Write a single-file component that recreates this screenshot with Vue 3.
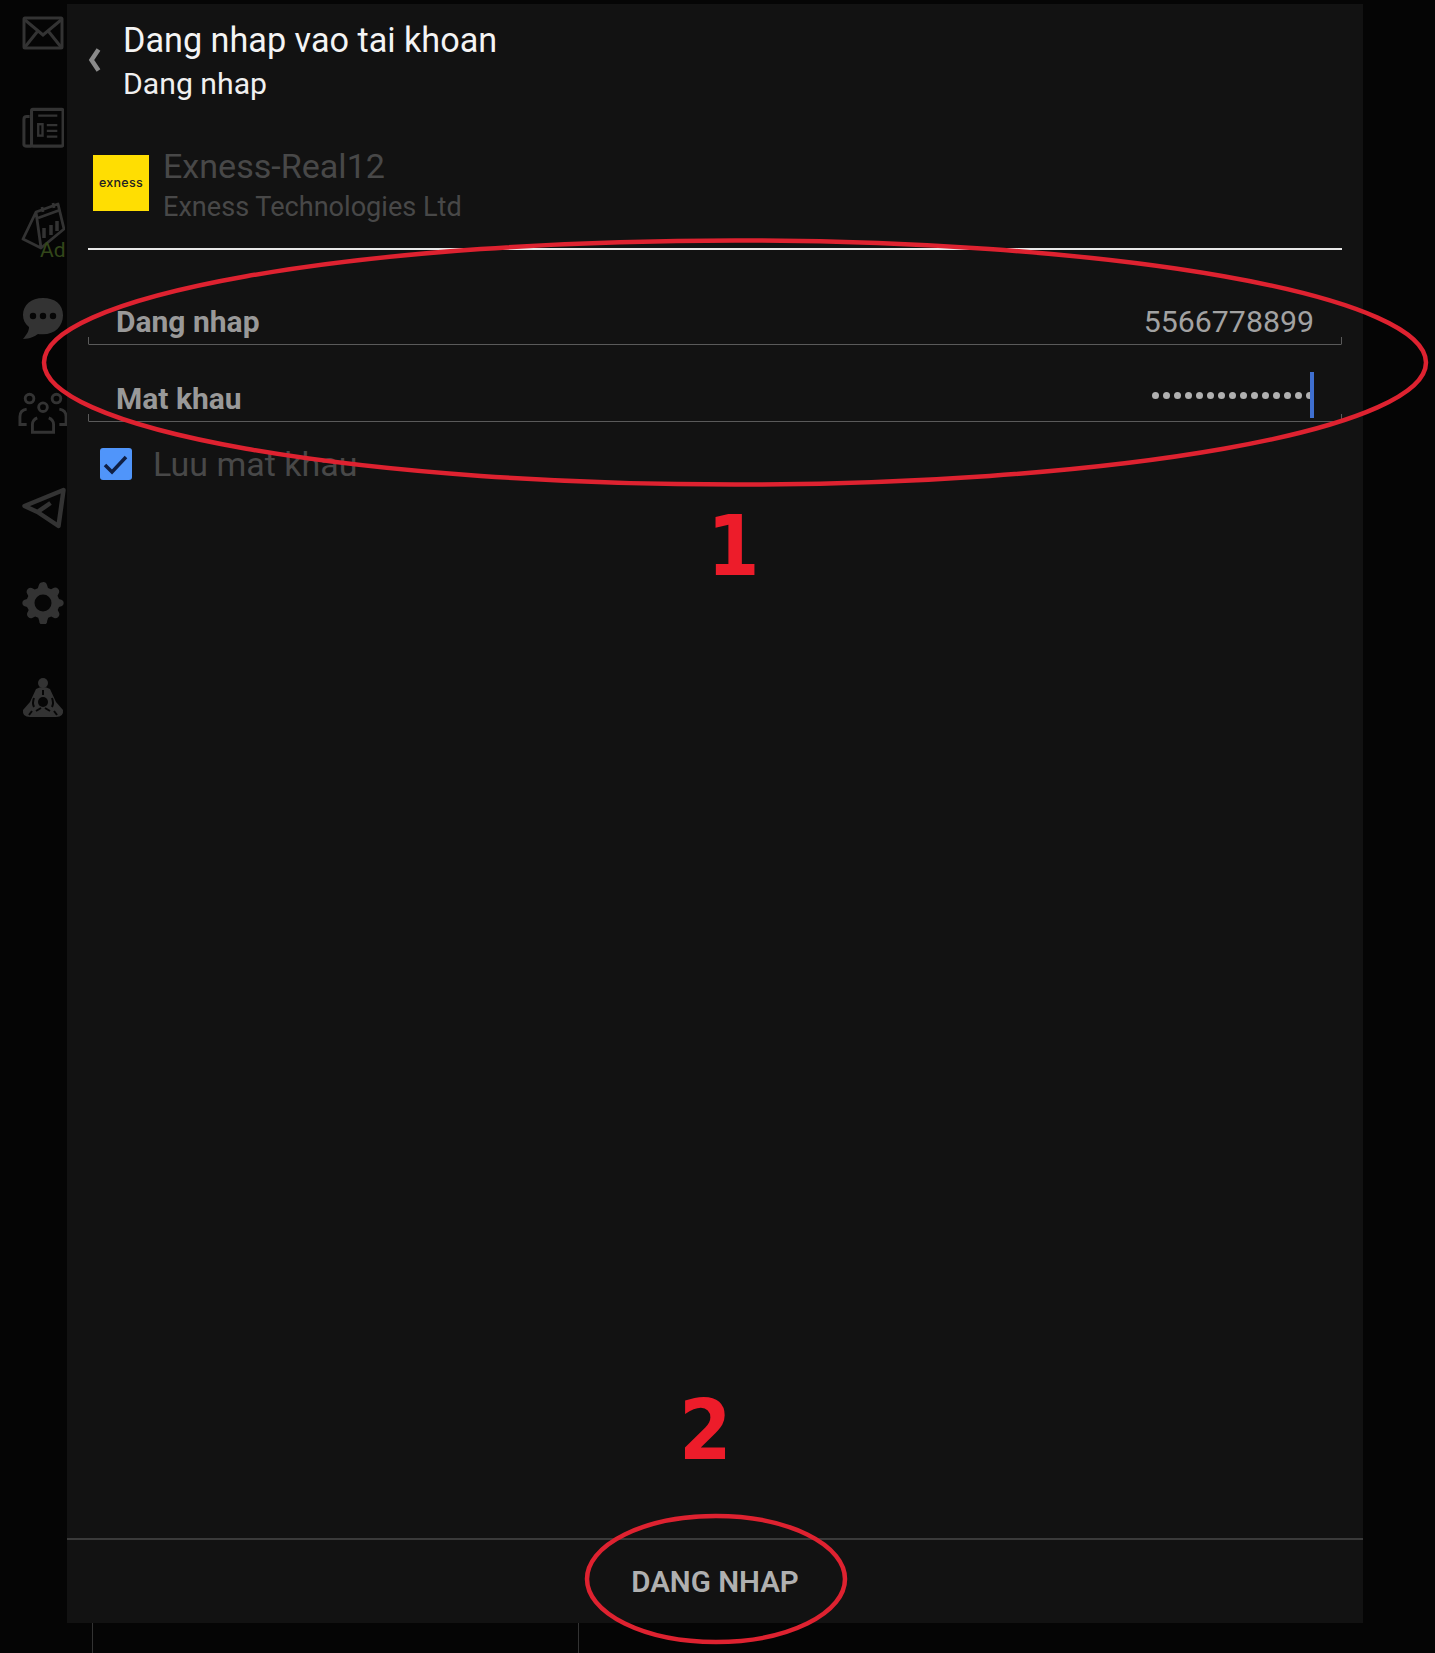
<script setup>
const dots = Array.from({ length: 15 })
</script>

<template>
  <div class="screen">
    <aside class="rail">
      <svg class="ic" viewBox="0 0 42 34" fill="none" stroke="#333" stroke-width="3">
        <rect x="2" y="2" width="38" height="30" rx="1" />
        <path d="M3 4l18 15L39 4M3 31l12-15M39 31L27 16" />
      </svg>
      <svg class="ic" viewBox="0 0 44 42" fill="none" stroke="#333" stroke-width="3.200">
        <path d="M8 9H5Q2 9 2 12v26q0 2 3 2h5M10 3q0-1.500 1.500-1.500h30q1.500 0 1.500 1.500v35q0 2-2 2H12q-2 0-2-2z" />
        <path d="M17 8h20M26 18h11M26 24h11M26 30h11" stroke-width="2.500" />
        <rect x="17" y="17" width="4.500" height="12" stroke-width="2.500" />
      </svg>
      <div class="cal">
        <svg class="ic" viewBox="0 0 44 48" fill="none" stroke="#333" stroke-width="2.800" stroke-linejoin="round">
          <path d="M15 10L37 2l6 25-23 19-18-9zM15 10L2 37M15 10l5 36" />
          <path d="M17 16l22-8M22 10l-1-5M33 6l-1-5" />
          <path d="M23 26v10M30 23v10M36 19v10" stroke-width="3.500" />
        </svg>
        <span class="ad">Ad</span>
      </div>
      <svg class="ic" viewBox="0 0 42 42">
        <path d="M21 1C9 1 1 8 1 18c0 5 2 9 6 12 0 4-2 7-6 12 7 0 12-3 15-5 2 .3 3 .3 5 .3 12 0 20-8 20-19S33 1 21 1z" fill="#333" />
        <circle cx="11" cy="19" r="3.200" fill="#060606" />
        <circle cx="21" cy="19" r="3.200" fill="#060606" />
        <circle cx="31" cy="19" r="3.200" fill="#060606" />
      </svg>
      <svg class="ic wide" viewBox="0 0 52 42" fill="none" stroke="#333" stroke-width="3">
        <circle cx="12" cy="6" r="4.500" />
        <circle cx="40" cy="6" r="4.500" />
        <circle cx="26" cy="15" r="4.500" />
        <path d="M9 17Q2 18 2 25V33H9M43 17Q50 18 50 25V33H43M20 26Q15 28 15 33V41H37V33Q37 28 32 26" />
      </svg>
      <svg class="ic tele" viewBox="0 0 46 42" fill="none" stroke="#333" stroke-width="4.500" stroke-linejoin="round">
        <path d="M43 3L4 19l13 6 21 14zM17 25L30 16" />
      </svg>
      <svg class="ic" viewBox="0 0 42 42">
        <path d="M21 0a4 4 0 0 1 4 3l1 3 3 1.300 3-1.500a4 4 0 0 1 5 5l-1.500 3L37 17l3 1a3.500 3.500 0 0 1 0 6l-3 1-1.300 3 1.500 3a4 4 0 0 1-5 5l-3-1.500-3 1.300-1 3a4 4 0 0 1-8 0l-1-3-3-1.300-3 1.500a4 4 0 0 1-5-5l1.500-3L5 25l-3-1a3.500 3.500 0 0 1 0-6l3-1 1.300-3-1.500-3a4 4 0 0 1 5-5l3 1.500 3-1.300 1-3a4 4 0 0 1 4-3z" fill="#333" />
        <circle cx="21" cy="21" r="8.500" fill="#060606" />
      </svg>
      <svg class="ic" viewBox="0 0 42 40">
        <circle cx="21" cy="5" r="5" fill="#333" />
        <path d="M14 11q7-4 14 0l6 13 7 8q1 7-7 7H8q-8 0-7-7l7-8z" fill="#333" />
        <circle cx="21" cy="24" r="5" fill="#060606" />
        <path d="M12 20q-2 5 0 9M30 20q2 5 0 9M14 33l5-3M28 33l-5-3M21 12v5M10 33l-3 4M32 33l3 4" stroke="#060606" stroke-width="2" fill="none" />
      </svg>
    </aside>

    <main class="panel">
      <header class="head">
        <svg class="back" viewBox="0 0 13 24"><path d="M10.500 1.500L3.500 12l7 10.500" fill="none" stroke="#8a8a8a" stroke-width="4.500" /></svg>
        <div class="head-text">
          <div class="title">Dang nhap vao tai khoan</div>
          <div class="subtitle">Dang nhap</div>
        </div>
      </header>

      <section class="broker">
        <div class="logo">exness</div>
        <div class="broker-text">
          <div class="server">Exness-Real12</div>
          <div class="company">Exness Technologies Ltd</div>
        </div>
      </section>

      <div class="field login">
        <span class="label">Dang nhap</span>
        <span class="value">5566778899</span>
      </div>
      <div class="field pass">
        <span class="label">Mat khau</span>
        <span class="dots">
          <i v-for="(d, i) in dots" :key="i"></i>
          <b class="caret"></b>
        </span>
      </div>

      <label class="save">
        <span class="box">
          <svg viewBox="0 0 32 32"><path d="M5 17l7 7L26 9" fill="none" stroke="#0f1f44" stroke-width="3.500" /></svg>
        </span>
        <span>Luu mat khau</span>
      </label>

      <footer class="foot">DANG NHAP</footer>
    </main>

    <i class="seam s1"></i>
    <i class="seam s2"></i>

    <svg class="marks" viewBox="0 0 1435 1653" fill="none" stroke="#de2230" stroke-width="4.500">
      <ellipse cx="735" cy="362.500" rx="691" ry="122" />
      <ellipse cx="716" cy="1579" rx="129" ry="63" />
    </svg>
    <span class="num n1">1</span>
    <span class="num n2">2</span>
  </div>
</template>

<style>
html, body { margin: 0; background: #050505; }
</style>

<style scoped>
.screen {
  position: relative;
  display: flex;
  width: 1435px;
  height: 1653px;
  overflow: hidden;
  background: #050505;
  font-family: Roboto, "Liberation Sans", sans-serif;
}
.rail {
  width: 67px;
  flex-shrink: 0;
  display: flex;
  flex-direction: column;
  align-items: center;
  padding: 12px 0 0 19px;
  box-sizing: border-box;
}
.ic {
  display: block;
  width: 42px;
  height: 42px;
  margin-bottom: 53px;
}
.ic.wide { width: 50px; }
.ic.tele { width: 47px; }
.cal { position: relative; height: 95px; }
.cal .ic { width: 44px; height: 48px; margin: 0; }
.ad {
  position: absolute;
  left: 19px;
  top: 36px;
  font-size: 21px;
  color: #33471a;
}
.panel {
  width: 1296px;
  height: 1619px;
  margin-top: 4px;
  flex-shrink: 0;
  display: flex;
  flex-direction: column;
  background: #121212;
  padding: 0 21px;
  box-sizing: border-box;
}
.head {
  display: flex;
  align-items: flex-start;
  height: 106px;
  padding-top: 13px;
  box-sizing: border-box;
}
.back { width: 13px; height: 24px; margin: 31px 22px 0 0; flex-shrink: 0; }
.title { font-size: 34.200px; line-height: 46px; color: #f4f4f4; }
.subtitle { font-size: 30.200px; line-height: 40px; margin-top: 1px; color: #f0f0f0; }
.broker {
  display: flex;
  align-items: center;
  gap: 14px;
  height: 140px;
  padding: 8px 0 0 5px;
  box-sizing: border-box;
  border-bottom: 2px solid #e8e8e8;
}
.broker-text { padding-top: 5px; }
.logo {
  width: 56px;
  height: 56px;
  background: #ffde02;
  display: flex;
  align-items: center;
  justify-content: center;
  padding-bottom: 2px;
  box-sizing: border-box;
  font-family: Inter, sans-serif;
  font-size: 12.500px;
  font-weight: 500;
  letter-spacing: 0.3px;
  color: #222;
}
.server { font-size: 34.100px; line-height: 44px; color: #484848; }
.company { font-size: 27.100px; line-height: 39px; color: #484848; }
.field {
  display: flex;
  align-items: center;
  justify-content: space-between;
  height: 42px;
  padding: 0 27px 4px 27px;
  box-sizing: border-box;
  position: relative;
  border-bottom: 1px solid #5a5a5a;
  border-left: 1px solid transparent;
  border-right: 1px solid transparent;
}
.field::before, .field::after {
  content: "";
  position: absolute;
  bottom: 0;
  width: 1px;
  height: 7px;
  background: #5a5a5a;
}
.field::before { left: -1px; }
.field::after { right: -1px; }
.login { margin-top: 53px; }
.pass { margin-top: 35px; }
.label { font-size: 30px; font-weight: 700; color: #999; }
.value { font-size: 30.300px; color: #a2a2a2; }
.dots {
  position: relative;
  display: flex;
  gap: 4px;
  align-items: center;
  margin-right: 1px;
  margin-top: -6px;
}
.dots i {
  width: 7px;
  height: 7px;
  border-radius: 50%;
  background: #b0b0b0;
}
.caret {
  position: absolute;
  right: -1px;
  top: -20px;
  width: 4px;
  height: 46px;
  background: #3f6fd0;
}
.save {
  display: flex;
  align-items: center;
  gap: 21px;
  margin: 22px 0 0 12px;
  font-size: 34px;
  color: #484848;
}
.box {
  width: 32px;
  height: 32px;
  border-radius: 3px;
  background: #5095fa;
  display: block;
}
.box svg { display: block; width: 32px; height: 32px; }
.foot {
  margin: auto -21px 0;
  height: 85px;
  border-top: 2px solid #3a3a3a;
  box-sizing: border-box;
  display: flex;
  align-items: center;
  justify-content: center;
  font-size: 29.500px;
  font-weight: 600;
  color: #b0b0b0;
}
.seam { position: absolute; width: 1px; background: #333; }
.s1 { left: 92px; top: 1623px; height: 30px; }
.s2 { left: 578px; top: 1623px; height: 30px; }
.marks { position: absolute; inset: 0; width: 1435px; height: 1653px; pointer-events: none; }
.num {
  position: absolute;
  font-family: "DejaVu Sans", sans-serif;
  font-stretch: condensed;
  font-weight: 700;
  font-size: 84px;
  line-height: 1;
  color: #ed1c2a;
}
.n1 { left: 707px; top: 504px; }
.n2 { left: 679px; top: 1388px; }
</style>
